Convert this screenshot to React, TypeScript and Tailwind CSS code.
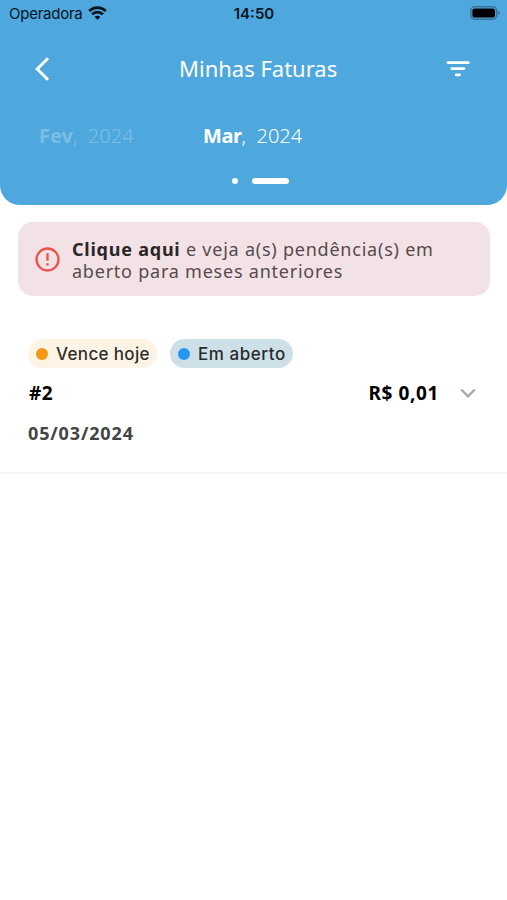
import React from 'react';

const WifiIcon: React.FC = () => (
  <svg className="h-[14px] w-[19px]" viewBox="0 0 19 14" fill="none" stroke="#06141d" strokeWidth={2.8}>
    <path d="M1.2 5a11.8 11.8 0 0 1 16.6 0" />
    <path d="M4.1 8.4a7.5 7.5 0 0 1 10.8 0" />
    <path d="M9.5 13.8 6.6 11a4 4 0 0 1 5.8 0z" fill="#06141d" stroke="none" />
  </svg>
);

const BatteryIcon: React.FC = () => (
  <svg className="h-[14px] w-[30px]" viewBox="0 0 30 14">
    <rect x="0.8" y="0.8" width="25.9" height="12.4" rx="4" fill="none" stroke="#397397" strokeWidth={1.6} />
    <rect x="2.4" y="2.4" width="22.6" height="9.2" rx="2.2" fill="#000" />
    <path d="M28.2 4.8c1.8.7 1.8 3.7 0 4.4z" fill="#397397" />
  </svg>
);

type BadgeProps = {
  label: string;
  className: string;
  dotClassName: string;
};

const Badge: React.FC<BadgeProps> = ({ label, className, dotClassName }) => (
  <div className={`flex h-[29px] items-center rounded-full pl-2 ${className}`}>
    <span className={`h-[12px] w-[12px] shrink-0 rounded-full ${dotClassName}`} />
    <span className="ml-2 whitespace-nowrap pt-px font-['Inter',sans-serif] text-[17px] font-medium leading-[29px]">
      {label}
    </span>
  </div>
);

const App: React.FC = () => {
  return (
    <div className="h-[900px] w-[507px] overflow-hidden bg-white font-['Noto_Sans',sans-serif]">
      {/* Header */}
      <header className="h-[205px] rounded-b-[20px] bg-[#4ea8de]">
        {/* Status bar */}
        <div className="grid h-[27px] grid-cols-3 items-center pl-[9px] pr-[7px] font-['Inter',sans-serif] text-[#06141d]">
          <div className="flex items-center gap-[6px] text-[15px]">
            <span className="pt-[2px] tracking-[-0.25px]">Operadora</span>
            <div className="pb-px">
              <WifiIcon />
            </div>
          </div>
          <span className="pr-px pt-[2px] text-center text-[15px] font-semibold">14:50</span>
          <div className="flex justify-end pb-px">
            <BatteryIcon />
          </div>
        </div>

        {/* Title bar */}
        <div className="flex h-[83px] items-center pl-[34px] pr-[37px]">
          <svg className="h-6 w-4" viewBox="0 0 16 24" fill="none" stroke="#fff" strokeWidth={3}>
            <path d="M14 1.2 3.2 12 14 22.8" />
          </svg>
          <h1 className="ml-[129px] whitespace-nowrap text-[22px] text-white">Minhas Faturas</h1>
          <svg className="ml-auto h-4 w-[24px]" viewBox="0 0 24 16" fill="none" stroke="#fff" strokeWidth={2.8} strokeLinecap="round">
            <path d="M2 1.6h20.4M5.8 7.6H18M10.2 13.8h3.4" />
          </svg>
        </div>

        {/* Months */}
        <div className="flex h-[52px] items-center whitespace-nowrap pl-[39px] text-[20px] text-white">
          <div className="w-[164px] opacity-25">
            <b>Fev</b>
            <span className="font-light">,&nbsp; 2024</span>
          </div>
          <div>
            <b className="tracking-[-0.4px]">Mar</b>
            <span className="font-light">,&nbsp; 2024</span>
          </div>
        </div>

        <div className="mt-[16px] flex items-center gap-[14px] pl-[232px]">
          <span className="h-[6px] w-[6px] rounded-full bg-white" />
          <span className="h-[6px] w-[37px] rounded-full bg-white" />
        </div>
      </header>

      {/* Pending notice */}
      <div className="mx-[18px] mt-[17px] flex h-[74px] w-[472px] items-center rounded-[15px] bg-[#f2e2e5] pl-[17px]">
        <svg className="h-[25px] w-[25px] shrink-0" viewBox="0 0 25 25" fill="none" stroke="#ee4f49" strokeWidth={2.3}>
          <circle cx="12.5" cy="12.5" r="11" />
          <path d="M12.5 6.2v7.6M12.5 16.2v2.4" />
        </svg>
        <p className="ml-[12px] whitespace-nowrap pt-px text-[18px] leading-[22px] tracking-[0.77px] text-[#554a4d]">
          <span className="block">
            <b className="text-[#2a2527]">Clique aqui</b> e veja a(s) pendência(s) em
          </span>
          <span className="block">aberto para meses anteriores</span>
        </p>
      </div>

      {/* Invoice */}
      <section className="mt-[43px] h-[135px] border-b-2 border-[#f5f5f5] pl-[28px] pr-[31px]">
        <div className="flex gap-[13px]">
          <Badge
            label="Vence hoje"
            className="w-[129px] bg-[#fef4e6] tracking-[0.35px] text-[#302e2b]"
            dotClassName="bg-[#f39a12]"
          />
          <Badge
            label="Em aberto"
            className="w-[123px] bg-[#cde0e7] tracking-[0.55px] text-[#272b2d]"
            dotClassName="bg-[#2595f3]"
          />
        </div>
        <div className="flex h-[50px] items-center whitespace-nowrap text-[19px] font-bold tracking-[0.6px] text-black">
          <span className="ml-px">#2</span>
          <span className="ml-auto">R$ 0,01</span>
          <svg className="ml-[21px] h-[10px] w-4" viewBox="0 0 16 10" fill="none" stroke="#a8a8a8" strokeWidth={2.4}>
            <path d="m1.2 1.5 6.8 6.8 6.8-6.8" />
          </svg>
        </div>
        <p className="whitespace-nowrap text-[18px] font-bold leading-[30px] tracking-[0.85px] text-[#444]">05/03/2024</p>
      </section>
    </div>
  );
};

export default App;
